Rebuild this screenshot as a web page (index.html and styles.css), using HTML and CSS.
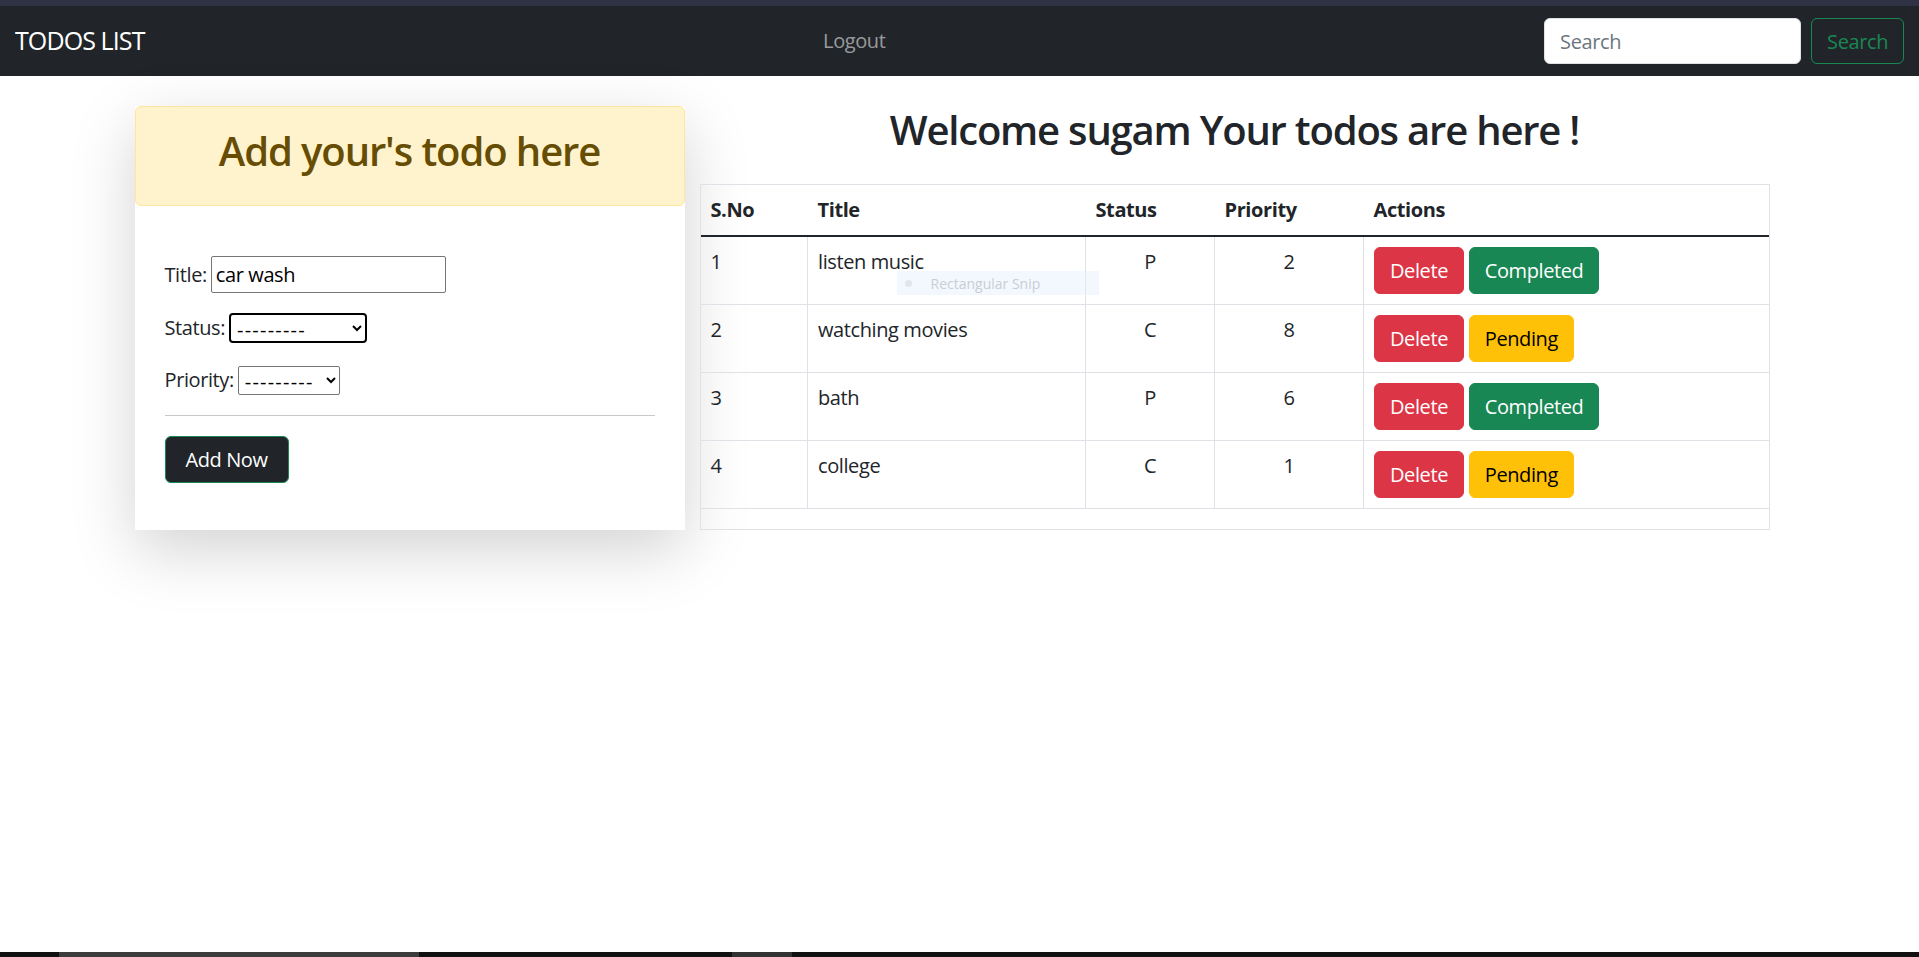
FILE: index.html
```html
<!DOCTYPE html>
<html lang="en">
<head>
<meta charset="utf-8">
<title>Todos List</title>
<link rel="stylesheet" href="styles.css">
</head>
<body>
<div class="page">
  <div class="topstrip"></div>
  <nav class="navbar">
    <a class="brand" href="#">TODOS LIST</a>
    <ul class="nav">
      <li><a class="nav-link" href="#">Logout</a></li>
    </ul>
    <form class="search">
      <input class="search-input" type="search" placeholder="Search">
      <button class="btn-search" type="button">Search</button>
    </form>
  </nav>

  <main class="main">
    <div class="container">
      <section class="card">
        <div class="card-head">
          <h2 class="card-title">Add your's todo here</h2>
        </div>
        <form class="card-body">
          <div class="field field-title">
            <label>Title:</label>
            <input class="in-title" type="text" value="car wash">
          </div>
          <div class="field field-status">
            <label>Status:</label>
            <select class="sel sel-status"><option>---------</option></select>
          </div>
          <div class="field field-priority">
            <label>Priority:</label>
            <select class="sel sel-priority"><option>---------</option></select>
          </div>
          <hr class="divider">
          <button class="btn-add" type="button">Add Now</button>
        </form>
      </section>

      <section class="list">
        <h2 class="welcome">Welcome sugam Your todos are here !</h2>
        <div class="table-box">
          <table class="todo-table">
            <colgroup>
              <col class="c-sno"><col class="c-title"><col class="c-status"><col class="c-pri"><col class="c-act">
            </colgroup>
            <thead>
              <tr><th>S.No</th><th>Title</th><th>Status</th><th>Priority</th><th>Actions</th></tr>
            </thead>
            <tbody>
              <tr>
                <td>1</td><td>listen music</td><td class="center">P</td><td class="center">2</td>
                <td><button class="btn btn-danger" type="button">Delete</button> <button class="btn btn-success" type="button">Completed</button></td>
              </tr>
              <tr>
                <td>2</td><td>watching movies</td><td class="center">C</td><td class="center">8</td>
                <td><button class="btn btn-danger" type="button">Delete</button> <button class="btn btn-warning" type="button">Pending</button></td>
              </tr>
              <tr>
                <td>3</td><td>bath</td><td class="center">P</td><td class="center">6</td>
                <td><button class="btn btn-danger" type="button">Delete</button> <button class="btn btn-success" type="button">Completed</button></td>
              </tr>
              <tr>
                <td>4</td><td>college</td><td class="center">C</td><td class="center">1</td>
                <td><button class="btn btn-danger" type="button">Delete</button> <button class="btn btn-warning" type="button">Pending</button></td>
              </tr>
            </tbody>
          </table>
          <div class="snip"><span class="snip-dot"></span><span class="snip-text">Rectangular Snip</span></div>
        </div>
      </section>
    </div>
  </main>

  <footer class="taskbar"><span class="seg seg1"></span><span class="seg seg2"></span></footer>
</div>
</body>
</html>
```
FILE: styles.css
```css
* { box-sizing: border-box; }

html, body { margin: 0; padding: 0; }

body {
  font-family: "Open Sans", "Noto Sans", sans-serif;
  font-size: 20px;
  line-height: 1.5;
  letter-spacing: -0.4px;
  color: #212529;
  background: #fff;
}

.page {
  display: flex;
  flex-direction: column;
  min-height: 100vh;
}

.topstrip {
  height: 6px;
  background: #2f3245;
}

/* navbar */
.navbar {
  height: 70px;
  background: #212529;
  display: flex;
  align-items: center;
  padding: 0 15px;
}

.brand {
  color: #fff;
  font-size: 25px;
  letter-spacing: -0.9px;
  text-decoration: none;
  margin-right: 20px;
}

.nav {
  list-style: none;
  margin: 0 auto;
  padding: 0;
  display: flex;
}

.nav-link {
  color: rgba(255, 255, 255, 0.55);
  text-decoration: none;
  padding: 10px;
}

.search {
  display: flex;
  gap: 10px;
  margin: 0;
}

.search-input {
  width: 257px;
  height: 46px;
  border: 1px solid #dee2e6;
  border-radius: 6px;
  padding: 0 15px;
  font-family: inherit;
  font-size: 20px;
  letter-spacing: -0.4px;
  color: #212529;
  background: #fff;
}

.search-input::placeholder { color: #6c757d; }

.btn-search {
  height: 46px;
  padding: 0 15px;
  border: 1px solid #198754;
  border-radius: 6px;
  background: transparent;
  color: #198754;
  font-family: inherit;
  font-size: 20px;
  letter-spacing: -0.4px;
}

/* main */
.main { flex: 1; }

.container {
  width: 1650px;
  margin: 30px auto 0;
  display: flex;
  align-items: flex-start;
}

.card {
  width: 550px;
  flex: none;
  background: #fff;
  box-shadow: 0 20px 60px rgba(0, 0, 0, 0.175);
}

.card-head {
  background: #fff3cd;
  border: 1px solid #ffe69c;
  border-radius: 6px;
  padding: 20px 20px;
  color: #664d03;
  text-align: center;
}

.card-title {
  font-size: 40px;
  line-height: 1.2;
  font-weight: 600;
  letter-spacing: -1.1px;
  margin: 0 0 10px;
}

.card-body {
  padding: 50px 30px 47px;
  margin: 0;
}

.field {
  display: flex;
  align-items: center;
  gap: 4px;
}

.field-title { margin-bottom: 20px; }
.field-status { margin-bottom: 22px; }

.in-title {
  width: 235px;
  height: 37px;
  padding: 1px 4px;
  border: 1px solid #767676;
  border-radius: 2px;
  font-family: inherit;
  font-size: 20px;
  letter-spacing: -0.4px;
  color: #000;
  background: #fff;
}

.sel {
  font-family: inherit;
  font-size: 20px;
  letter-spacing: 1.2px;
  line-height: 1;
  color: #000;
  background: #fff;
  padding: 0 2px;
}

.sel-status {
  width: 138px;
  height: 30px;
  border: 2px solid #000;
  border-radius: 4px;
}

.sel-priority {
  width: 102px;
  height: 29px;
  border: 1px solid #767676;
  border-radius: 2px;
}

.divider {
  margin: 20px 0;
  border: 0;
  border-top: 1px solid #c8c9ca;
  height: 0;
}

.btn-add {
  height: 47px;
  padding: 0 20px;
  background: #212529;
  color: #fff;
  border: 1px solid #198754;
  border-radius: 6px;
  font-family: inherit;
  font-size: 20px;
  letter-spacing: -0.4px;
}

/* list */
.list {
  flex: 1;
  padding: 0 15px;
}

.welcome {
  font-size: 40px;
  line-height: 1.2;
  font-weight: 600;
  letter-spacing: -1.2px;
  text-align: center;
  margin: 0 0 30px;
}

.table-box {
  position: relative;
  border: 1px solid #dee2e6;
  padding-bottom: 20px;
}

.todo-table {
  width: 100%;
  border-collapse: collapse;
  table-layout: fixed;
}

.c-sno { width: 107px; }
.c-title { width: 278px; }
.c-status { width: 129px; }
.c-pri { width: 149px; }

.todo-table th {
  text-align: left;
  font-weight: 700;
  padding: 10px;
  border-bottom: 2px solid #212529;
}

.todo-table td {
  padding: 10px;
  vertical-align: top;
  border-bottom: 1px solid #dee2e6;
  border-left: 1px solid #dee2e6;
}

.todo-table td:first-child { border-left: 0; }

.todo-table td.center { text-align: center; }

.btn {
  display: inline-block;
  height: 47px;
  padding: 0 15px;
  border: 1px solid transparent;
  border-radius: 6px;
  font-family: inherit;
  font-size: 20px;
  letter-spacing: -0.4px;
  line-height: 45px;
  vertical-align: top;
}

.btn-danger { background: #dc3545; border-color: #dc3545; color: #fff; }
.btn-success { background: #198754; border-color: #198754; color: #fff; }
.btn-warning { background: #ffc107; border-color: #ffc107; color: #000; }

/* screen snip tooltip overlay */
.snip {
  position: absolute;
  left: 196px;
  top: 86px;
  width: 202px;
  height: 24px;
  background: rgba(228, 240, 255, 0.45);
  display: flex;
  align-items: center;
  font-size: 14px;
  letter-spacing: 0;
  color: #c9cdd4;
}

.snip-dot {
  width: 7px;
  height: 7px;
  border-radius: 50%;
  background: #e2e5ea;
  margin-left: 8px;
  margin-right: 19px;
}

/* bottom strip */
.taskbar {
  height: 5px;
  background: #111;
  display: flex;
}

.seg { display: block; height: 5px; }
.seg1 { margin-left: 59px; width: 360px; background: #3c3c3c; }
.seg2 { margin-left: 313px; width: 60px; background: #333; }
```
